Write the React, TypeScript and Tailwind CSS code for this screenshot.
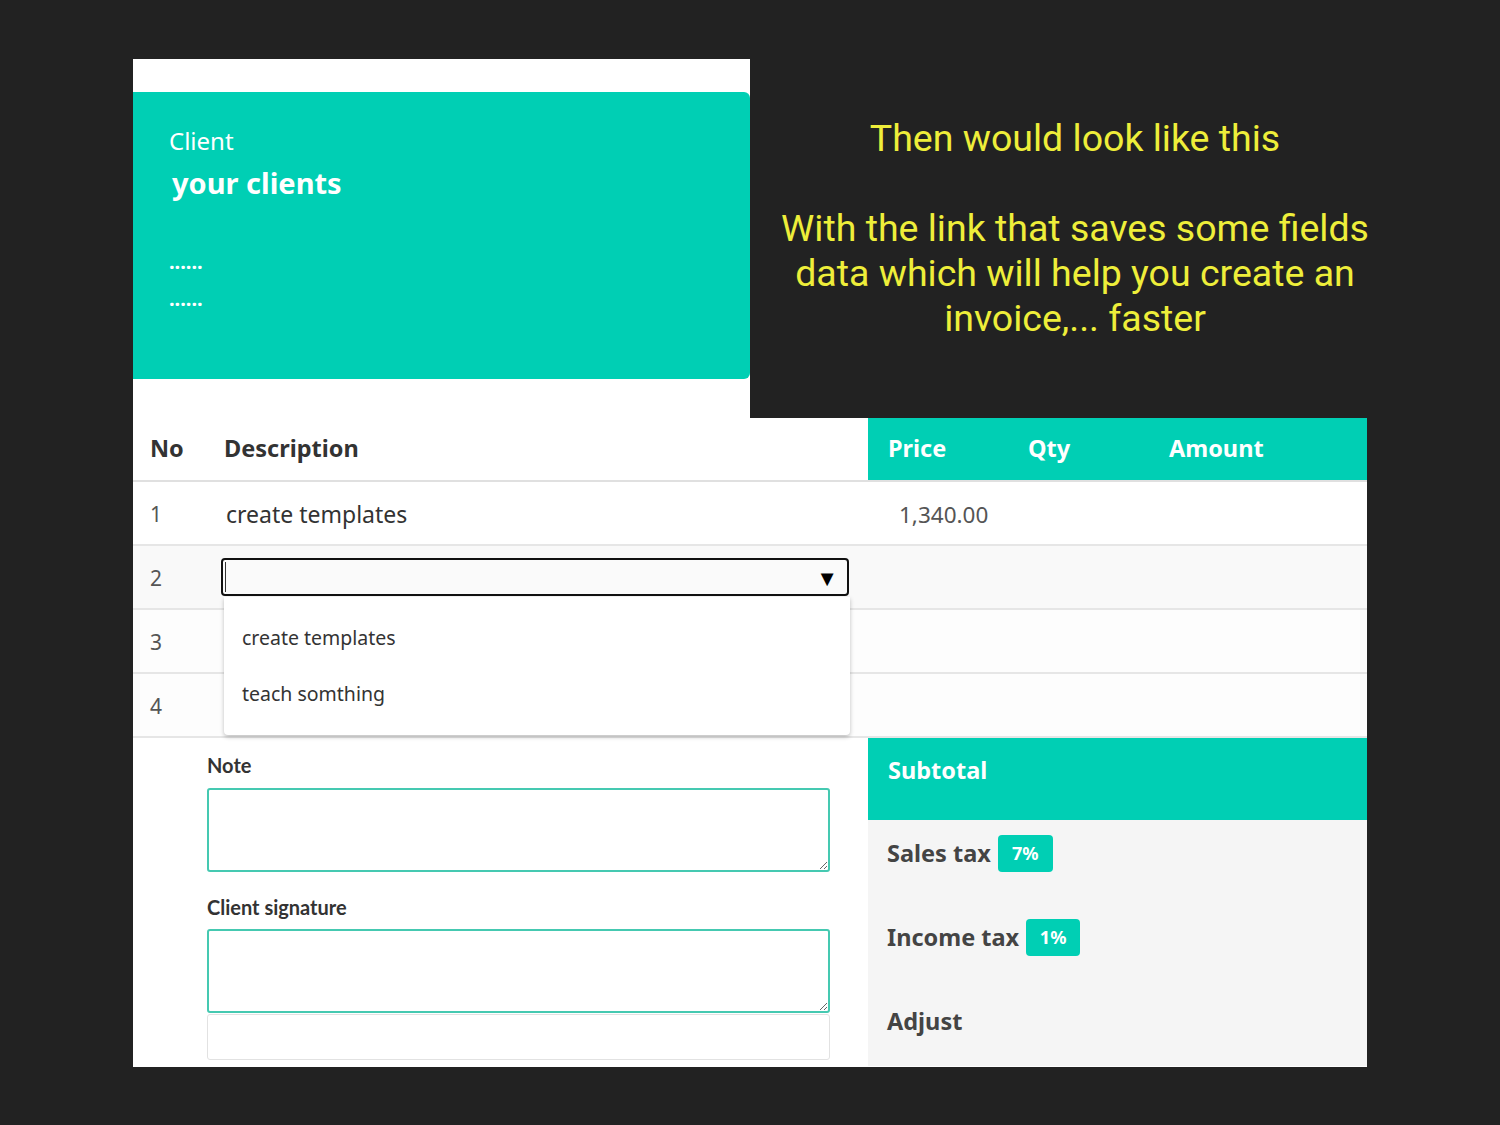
import React from "react";

const UI = { fontFamily: '"Noto Sans", "Open Sans", sans-serif' };
const LBL = { fontFamily: 'Lato, "Noto Sans", sans-serif' };

function Row({ n, bg, children, price }: { n: string; bg: string; children?: React.ReactNode; price?: string }) {
  return (
    <div className={`flex h-[64px] border-b-2 border-[#e6e6e6] ${bg}`}>
      <div className="w-[73px] pl-[17px] flex items-center text-[21px] text-[#555] pt-[3px]">{n}</div>
      <div className="w-[662px] pl-[16px] flex items-center text-[23px] text-[#333] pt-[2px]">{children}</div>
      <div className="flex-1 pl-[31px] flex items-center text-[22.5px] text-[#555] pt-[3px]">{price}</div>
    </div>
  );
}

export default function App() {
  return (
    <div className="min-h-[1125px] w-[1500px] bg-[#222222] pt-[59px] pl-[133px]" style={UI}>
      <div className="flex h-[359px]">
        <div className="w-[617px] bg-white pt-[33px]">
          <div className="h-[287px] bg-[#00cfb4] rounded-r-md pl-[36px] pt-[32px] text-white">
            <div className="text-[24px] leading-[34px]">Client</div>
            <div className="text-[29px] font-bold leading-[40px] pl-[3px] mt-[5px]">your clients</div>
            <div className="mt-[40px] text-[20px] font-bold leading-[37px]">......</div>
            <div className="text-[20px] font-bold leading-[37px]">......</div>
          </div>
        </div>
        <div
          className="w-[650px] px-[25px] pt-[57px] text-center text-[37.5px] leading-[45px] text-[#eeee3a]"
          style={{ fontFamily: 'Roboto, sans-serif' }}
        >
          <p>Then would look like this</p>
          <p className="mt-[45px]">With the link that saves some fields data which will help you create an invoice,... faster</p>
        </div>
      </div>

      <div className="w-[1234px] h-[649px] bg-white relative">
        <div className="flex h-[64px] border-b-2 border-[#e0e0e0]">
          <div className="w-[73px] pl-[17px] flex items-center text-[23.5px] font-bold text-[#333]">No</div>
          <div className="w-[662px] pl-[18px] flex items-center text-[23.5px] font-bold text-[#333]">Description</div>
          <div className="flex-1 bg-[#00cfb4] flex items-center text-[23.5px] font-bold text-white">
            <div className="w-[140px] pl-[20px]">Price</div>
            <div className="w-[141px] pl-[20px]">Qty</div>
            <div className="pl-[20px]">Amount</div>
          </div>
        </div>
        <Row n="1" bg="bg-white" price="1,340.00">
          <span className="pl-[4px]">create templates</span>
        </Row>
        <Row n="2" bg="bg-[#f9f9f9]">
          <div className="w-[628px] h-[38px] -ml-[1px] -mt-[2px] border-2 border-[#111] rounded-[4px] bg-[#fafafa] flex items-center justify-between pl-[2px] pr-[9px]">
            <div className="w-[1px] h-[30px] bg-[#333]" />
            <span className="text-[22px] leading-none text-black">▼</span>
          </div>
        </Row>
        <Row n="3" bg="bg-[#fdfdfd]" />
        <Row n="4" bg="bg-[#fdfdfd]" />

        <div className="absolute left-[91px] top-[179px] w-[626px] h-[138px] bg-white rounded-b-[4px] shadow-[0_2px_4px_rgba(0,0,0,0.25)] pl-[18px] pt-[24px] text-[19.5px] text-[#333]">
          <div className="leading-[34px]">create templates</div>
          <div className="leading-[34px] mt-[22px]">teach somthing</div>
        </div>

        <div className="flex">
          <div className="w-[735px] pl-[74px] pt-[15px]" style={LBL}>
            <div className="text-[20px] font-bold text-[#333] leading-[24px]">Note</div>
            <textarea className="block mt-[11px] w-[623px] h-[84px] border-2 border-[#45c9b1] rounded-[3px] bg-white outline-none" />
            <div className="mt-[23px] text-[20px] font-bold text-[#333] leading-[24px]">Client signature</div>
            <textarea className="block mt-[10px] w-[623px] h-[84px] border-2 border-[#45c9b1] rounded-[3px] bg-white outline-none" />
            <div className="mt-[1px] w-[623px] h-[46px] border border-[#e2e2e2] rounded-[3px] bg-white" />
          </div>
          <div className="flex-1 h-[328px] bg-[#f5f5f5]">
            <div className="h-[82px] bg-[#00cfb4] pl-[20px] pt-[16px] text-[23.5px] font-bold text-white leading-[32px]">Subtotal</div>
            <div className="pl-[19px] pt-[15px] text-[23.5px] font-bold text-[#444]">
              <div className="flex items-center gap-[7px] h-[37px]">
                <span>Sales tax</span>
                <span className="h-[37px] w-[55px] rounded-[4px] bg-[#00cfb4] text-white text-[18px] flex items-center justify-center">7%</span>
              </div>
              <div className="flex items-center gap-[7px] h-[37px] mt-[47px]">
                <span>Income tax</span>
                <span className="h-[37px] w-[54px] rounded-[4px] bg-[#00cfb4] text-white text-[18px] flex items-center justify-center">1%</span>
              </div>
              <div className="flex items-center h-[37px] mt-[47px]">
                <span>Adjust</span>
              </div>
            </div>
          </div>
        </div>
      </div>
    </div>
  );
}
